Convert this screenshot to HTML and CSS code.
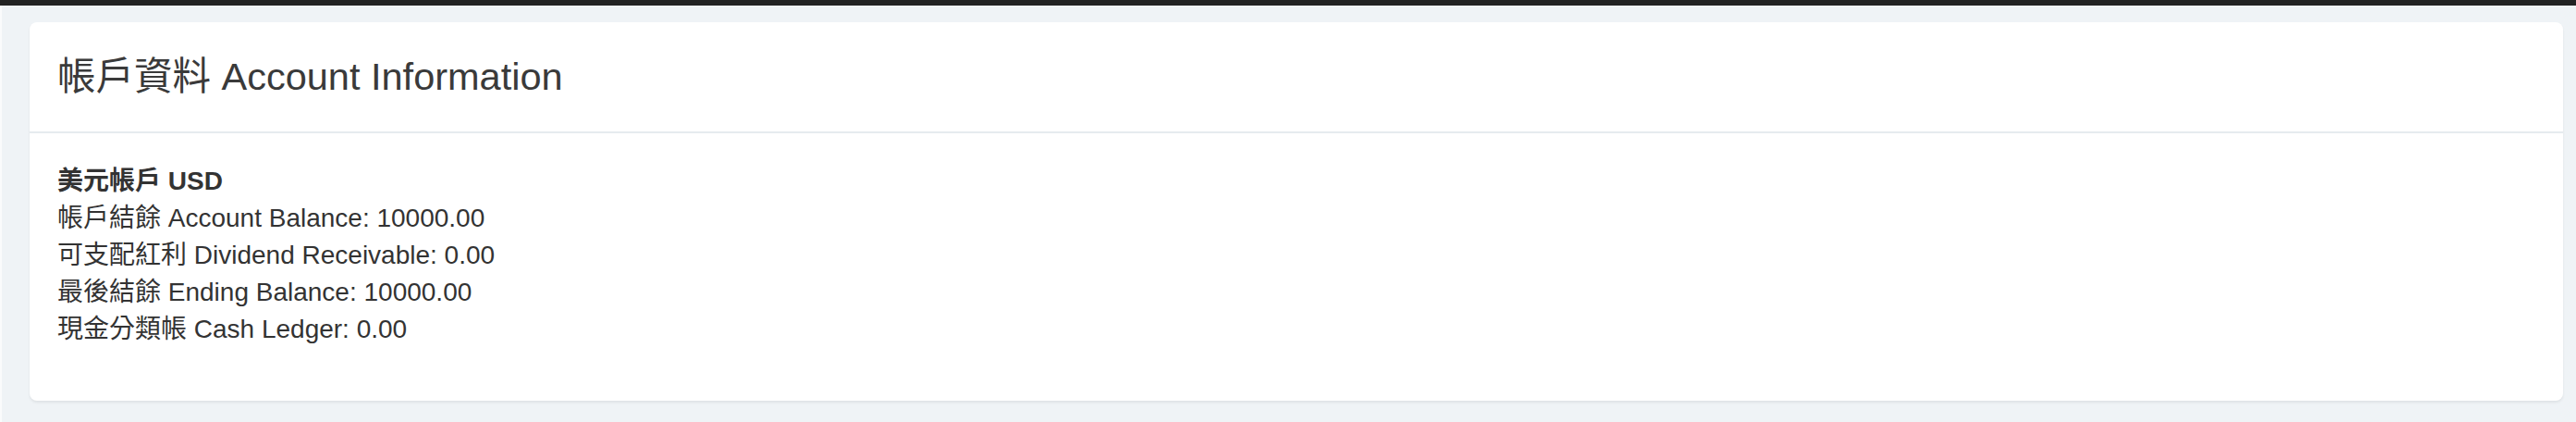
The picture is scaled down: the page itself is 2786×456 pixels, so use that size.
FILE: index.html
```html
<!DOCTYPE html>
<html lang="zh-Hant">
<head>
<meta charset="utf-8">
<title>帳戶資料 Account Information</title>
<link rel="stylesheet" href="styles.css">
</head>
<body>
<div class="topbar"></div>
<div class="layout">
  <div class="edge"></div>
  <main class="main">
    <section class="card">
      <header class="card-header">
        <h3 class="card-title">帳戶資料 Account Information</h3>
      </header>
      <div class="card-body">
        <p class="account">
          <strong>美元帳戶 USD</strong><br>
          帳戶結餘 Account Balance: 10000.00<br>
          可支配紅利 Dividend Receivable: 0.00<br>
          最後結餘 Ending Balance: 10000.00<br>
          現金分類帳 Cash Ledger: 0.00
        </p>
      </div>
    </section>
  </main>
</div>
</body>
</html>
```

FILE: styles.css
```css
html, body {
  margin: 0;
  padding: 0;
}
body {
  background: #eff3f6;
  font-family: "Liberation Sans", "Noto Sans CJK TC", sans-serif;
  color: #333333;
  height: 456px;
  overflow: hidden;
}
.topbar {
  height: 6px;
  background: #222222;
}
.layout {
  display: flex;
  height: 450px;
}
.edge {
  width: 2px;
  background: #fafbfc;
}
.main {
  flex: 1;
  padding: 18px 14px 0 30px;
}
.card {
  background: #ffffff;
  border-radius: 8px;
  box-shadow: 0 2px 3px rgba(0, 0, 0, 0.07);
}
.card-header {
  height: 120px;
  box-sizing: border-box;
  border-bottom: 2px solid #e6ebef;
  display: flex;
  align-items: center;
  padding: 0 30px;
}
.card-title {
  margin: 0;
  font-size: 41.5px;
  font-weight: normal;
  color: #3a3a3a;
  line-height: 1.1;
}
.card-body {
  padding: 32px 30px 37px;
}
.account {
  margin: 0 0 20px;
  font-size: 28px;
  line-height: 40px;
}
.account strong {
  font-weight: bold;
}
```
